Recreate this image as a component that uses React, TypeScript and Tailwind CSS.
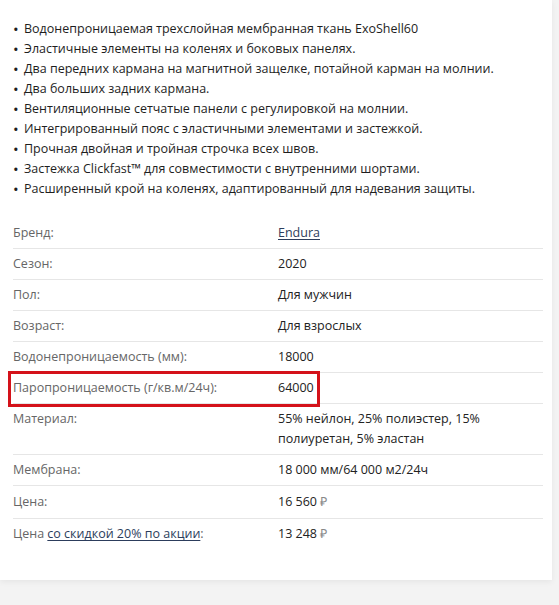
import React from "react";

const features = [
  "Водонепроницаемая трехслойная мембранная ткань ExoShell60",
  "Эластичные элементы на коленях и боковых панелях.",
  "Два передних кармана на магнитной защелке, потайной карман на молнии.",
  "Два больших задних кармана.",
  "Вентиляционные сетчатые панели с регулировкой на молнии.",
  "Интегрированный пояс с эластичными элементами и застежкой.",
  "Прочная двойная и тройная строчка всех швов.",
  "Застежка Clickfast™ для совместимости с внутренними шортами.",
  "Расширенный крой на коленях, адаптированный для надевания защиты.",
];

const Link = ({ children }: { children: React.ReactNode }) => (
  <a href="#" className="text-[#2c3d5c] underline underline-offset-2 decoration-[#2c3d5c]">
    {children}
  </a>
);

type Row = { label: React.ReactNode; value: React.ReactNode; marked?: boolean; tall?: boolean };

const rows: Row[] = [
  { label: "Бренд:", value: <Link>Endura</Link> },
  { label: "Сезон:", value: "2020" },
  { label: "Пол:", value: "Для мужчин" },
  { label: "Возраст:", value: "Для взрослых" },
  { label: "Водонепроницаемость (мм):", value: "18000" },
  { label: "Паропроницаемость (г/кв.м/24ч):", value: "64000", marked: true },
  { label: "Материал:", value: "55% нейлон, 25% полиэстер, 15% полиуретан, 5% эластан" },
  { label: "Мембрана:", value: "18 000 мм/64 000 м2/24ч" },
  {
    label: "Цена:",
    value: (
      <>
        16 560 <span className="text-[#888]">₽</span>
      </>
    ),
    tall: true,
  },
  {
    label: (
      <>
        Цена <Link>со скидкой 20% по акции</Link>:
      </>
    ),
    value: (
      <>
        13 248 <span className="text-[#888]">₽</span>
      </>
    ),
  },
];

export default function App() {
  return (
    <div className="min-h-screen bg-[#f3f3f3] font-['Open_Sans',sans-serif] text-[12.5px]">
      <div className="w-[552px] bg-white pb-[31px] shadow-[0_2px_6px_rgba(0,0,0,0.06)]">
        {/* FEATURES */}
        <ul className="pt-[19px] pl-[13px] text-[#1e1e1e] leading-[20px]">
          {features.map((f) => (
            <li key={f} className="flex">
              <span className="w-[11px] shrink-0 text-[15px] leading-[20px]">•</span>
              <span>{f}</span>
            </li>
          ))}
        </ul>

        {/* SPECS */}
        <div className="mt-[19px] mx-[13px] w-[530px]">
          {rows.map((r, i) => (
            <div
              key={i}
              className={`relative grid grid-cols-2 leading-[20px] ${
                r.tall ? "py-[6px]" : "py-[5px]"
              } ${i < rows.length - 1 ? "border-b border-[#e6e6e6]" : ""}`}
            >
              <div className="text-[#666]">{r.label}</div>
              <div className="text-[#222]">{r.value}</div>
              {r.marked && (
                <div className="absolute left-[-5px] top-[-2px] w-[312px] h-[36px] border-[3px] border-[#d4121a]" />
              )}
            </div>
          ))}
        </div>
      </div>
    </div>
  );
}
